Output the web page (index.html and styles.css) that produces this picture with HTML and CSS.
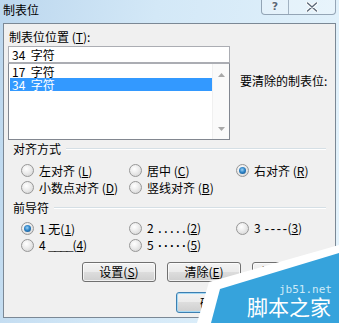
FILE: index.html
```html
<!DOCTYPE html>
<html lang="zh-CN">
<head>
<meta charset="utf-8">
<link rel="stylesheet" href="styles.css">
</head>
<body>
<div class="window">
  <div class="titlebar">
    <span class="title">制表位</span>
    <div class="caption">
      <div class="cbtn help">?</div>
      <div class="cbtn close">
        <svg width="12" height="10" viewBox="0 0 12 10"><path d="M1.5 1 L10.5 9 M10.5 1 L1.5 9" stroke="#fff" stroke-width="3.2" stroke-linecap="round"/><path d="M1.5 1 L10.5 9 M10.5 1 L1.5 9" stroke="#5a6878" stroke-width="1.4" stroke-linecap="round"/></svg>
      </div>
    </div>
  </div>
  <div class="client">
    <div class="top">
      <div class="left-col">
        <div class="label">制表位位置 (<u>T</u>):</div>
        <div class="input">34&nbsp; 字符</div>
        <div class="list">
          <div class="items">
            <div class="item">17&nbsp; 字符</div>
            <div class="item sel">34&nbsp; 字符</div>
          </div>
          <div class="scrollbar">
            <svg width="7" height="4" viewBox="0 0 7 4"><path d="M0 4 L3.5 0 L7 4Z" fill="#a8a8a8"/></svg>
            <svg width="7" height="4" viewBox="0 0 7 4"><path d="M0 0 L3.5 4 L7 0Z" fill="#a8a8a8"/></svg>
          </div>
        </div>
      </div>
      <div class="clear-label">要清除的制表位:</div>
    </div>

    <div class="group-head"><span>对齐方式</span><div class="line"></div></div>
    <div class="radios align">
      <div class="opt"><span class="radio"></span><span>左对齐 (<u>L</u>)</span></div>
      <div class="opt"><span class="radio"></span><span>居中 (<u>C</u>)</span></div>
      <div class="opt"><span class="radio on"></span><span>右对齐 (<u>R</u>)</span></div>
      <div class="opt"><span class="radio"></span><span>小数点对齐 (<u>D</u>)</span></div>
      <div class="opt"><span class="radio"></span><span>竖线对齐 (<u>B</u>)</span></div>
    </div>

    <div class="group-head head2"><span>前导符</span><div class="line"></div></div>
    <div class="radios leader">
      <div class="opt"><span class="radio on"></span><span>1 无(<u>1</u>)</span></div>
      <div class="opt"><span class="radio"></span><span>2 <span class="mono">.....</span>(<u>2</u>)</span></div>
      <div class="opt"><span class="radio"></span><span>3 <span class="mono">----</span>(<u>3</u>)</span></div>
      <div class="opt"><span class="radio"></span><span>4 <span class="mono">____</span>(<u>4</u>)</span></div>
      <div class="opt"><span class="radio"></span><span>5 <span class="mono bold">·····</span>(<u>5</u>)</span></div>
    </div>

    <div class="btn-row row1">
      <div class="btn">设置(<u>S</u>)</div>
      <div class="btn">清除(<u>E</u>)</div>
      <div class="btn">全部清除(<u>A</u>)</div>
    </div>
    <div class="btn-row row2">
      <div class="btn default">确定</div>
      <div class="btn">取消</div>
    </div>
  </div>
</div>
<svg class="watermark" width="339" height="323" viewBox="0 0 339 323">
  <polygon points="197,323 209,282 339,245 339,323" fill="#ffffff"/>
  <polygon points="211,323 220,289 339,253 339,323" fill="#36a3dc"/>
  <text x="279" y="293" class="wm-url">jb51.net</text>
  <text x="247" y="315" class="wm-name">脚本之家</text>
</svg>
</body>
</html>
```
FILE: styles.css
```css
* { box-sizing: border-box; }
html, body { margin: 0; padding: 0; }
body {
  width: 339px;
  height: 323px;
  overflow: hidden;
  position: relative;
  background: linear-gradient(100deg, #bcd7ee 0%, #d3e8f7 40%, #e4f3fc 100%);
  font-family: "Noto Sans CJK SC", "Noto Sans", sans-serif;
  font-size: 12px;
  color: #000;
}
u { text-decoration: underline; text-underline-offset: 1px; }

.window {
  display: flex;
  flex-direction: column;
  height: 323px;
  padding: 0 3px 5px 3px;
}
.titlebar {
  height: 23px;
  display: flex;
  justify-content: space-between;
  align-items: flex-start;
}
.title {
  margin-top: 2px;
  line-height: 16px;
  font-size: 12px;
}
.caption {
  display: flex;
  height: 15px;
  border: 1px solid rgba(80, 100, 125, 0.55);
  border-top: none;
  border-radius: 0 0 4px 4px;
  background: rgba(255, 255, 255, 0.25);
}
.cbtn {
  display: flex;
  align-items: center;
  justify-content: center;
}
.help {
  width: 27px;
  border-right: 1px solid rgba(80, 100, 125, 0.45);
  font-family: "DejaVu Sans", sans-serif;
  font-weight: bold;
  font-size: 11px;
  line-height: 14px;
  color: #5a6878;
  text-shadow: 0 0 2px #fff, 0 0 1px #fff;
}
.close { width: 46px; }

.client {
  flex: 1;
  border: 1px solid #7b8895;
  background: #f0f0f0;
  padding: 0 4px;
  display: flex;
  flex-direction: column;
}
.top { display: flex; gap: 10px; }
.left-col { width: 222px; display: flex; flex-direction: column; }
.label {
  margin: 5px 0 1px 1px;
  line-height: 16px;
}
.input {
  height: 17px;
  border: 1px solid #abadb3;
  background: #fff;
  padding-left: 3px;
  line-height: 15px;
}
.list {
  height: 77px;
  border: 1px solid #828790;
  border-top-color: #abadb3;
  background: #fff;
  display: flex;
}
.items { flex: 1; padding: 1px 0 0 1px; }
.item { height: 13px; line-height: 13px; padding-left: 2px; }
.item.sel { background: #3399ff; color: #fff; }
.scrollbar {
  width: 17px;
  background: #fafafa;
  border-left: 1px solid #f0f0f0;
  display: flex;
  flex-direction: column;
  justify-content: space-between;
  align-items: center;
  padding: 9px 0 8px;
}
.clear-label { margin-top: 49px; line-height: 16px; }

.group-head {
  margin-top: 1px;
  height: 16px;
  display: flex;
  align-items: center;
  gap: 5px;
  padding-left: 5px;
  padding-right: 5px;
  line-height: 16px;
}
.group-head .line {
  flex: 1;
  height: 2px;
  border-top: 1px solid #d5dfe5;
  border-bottom: 1px solid #ffffff;
}
.head2 { margin-top: 4px; }

.radios {
  display: grid;
  grid-template-columns: 108px 107px auto;
  grid-auto-rows: 17px;
  padding-left: 13px;
  margin-top: 5px;
}
.leader { margin-top: 4px; }
.opt {
  display: flex;
  align-items: center;
  gap: 5px;
  line-height: 16px;
  white-space: nowrap;
}
.mono {
  font-family: "Liberation Mono", monospace;
  font-size: 12px;
  letter-spacing: -1.2px;
}
.mono.bold { font-weight: bold; }
.radio {
  width: 13px;
  height: 13px;
  flex: none;
  border-radius: 50%;
  border: 1px solid #979797;
  background: radial-gradient(circle at 40% 35%, #ffffff 0%, #eeeeee 40%, #cfcfcf 100%);
  display: flex;
  align-items: center;
  justify-content: center;
}
.radio.on::after {
  content: "";
  width: 7px;
  height: 7px;
  border-radius: 50%;
  background: radial-gradient(circle at 45% 40%, #9fd3f5 0%, #2f85c8 45%, #0c4579 100%);
}

.btn-row { display: flex; gap: 11px; }
.row1 { margin-top: 8px; padding-left: 74px; }
.row2 { margin-top: 10px; padding-left: 168px; }
.btn {
  width: 74px;
  height: 20px;
  border: 1px solid #707070;
  border-radius: 3px;
  background: linear-gradient(#f3f3f3 0%, #ebebeb 48%, #dddddd 50%, #cfcfcf 100%);
  box-shadow: inset 0 0 0 1px rgba(255, 255, 255, 0.7);
  display: flex;
  align-items: center;
  justify-content: center;
  line-height: 16px;
}
.row2 .btn { height: 21px; }
.btn.default {
  border-color: #3c7fb1;
  box-shadow: inset 0 0 0 1px #a6d9f4;
}

.watermark {
  position: absolute;
  left: 0;
  top: 0;
}
.wm-url {
  font-family: "DejaVu Sans Mono", monospace;
  font-size: 11px;
  fill: #cdeaf8;
}
.wm-name {
  font-family: "Noto Sans CJK SC", sans-serif;
  font-size: 21px;
  fill: #ffffff;
}
```
